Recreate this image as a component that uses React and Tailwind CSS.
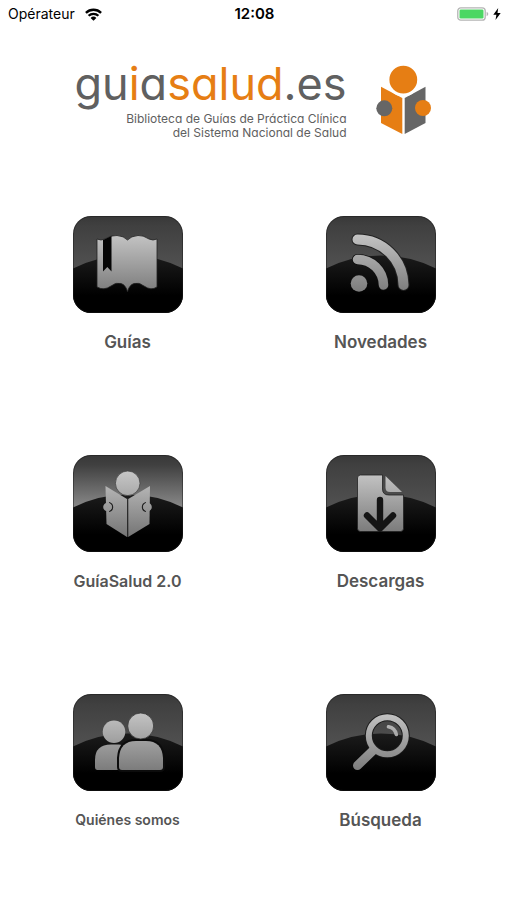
import { useId } from 'react';

const Book = ({ fill }) => (
  <>
    <path
      fill={fill}
      stroke="#222"
      strokeWidth="0.8"
      d="M24 23 Q28 25 32 23 Q38 19 44 19.500 Q51 20 54.500 24 Q58 20 65 19.500 Q70 19 76 23 Q80 25 84 23 V71 Q78 75 71 70 Q66 66 61 67.500 Q56 69 54.500 76 Q53 69 48 67.500 Q43 66 38 70 Q31 75 24 71 Z"
    />
    <path fill="#050505" d="M30 24 L38.500 20 V55.500 L34.300 51 L30 55.500 Z" />
  </>
);

const Feed = ({ fill }) => (
  <>
    <circle cx="33" cy="67.500" r="8.300" fill={fill} />
    <g fill="none" strokeLinecap="round">
      <path stroke="#111" strokeWidth="11" d="M31.500 43.500 A26 26 0 0 1 57.500 69" />
      <path stroke="#222" strokeWidth="12" d="M31.500 23.500 A46 46 0 0 1 77.500 69" />
      <path stroke={fill} strokeWidth="9.500" d="M31.500 43.500 A26 26 0 0 1 57.500 69" />
      <path stroke={fill} strokeWidth="10" d="M31.500 23.500 A46 46 0 0 1 77.500 69" />
    </g>
  </>
);

const Reader = ({ fill }) => (
  <>
    <path fill={fill} d="M32.500 31 L54 44 V82 L33.500 69 Z" />
    <path fill={fill} d="M77 31 L55.200 44 V82 L76.500 69 Z" />
    <path stroke="#333" strokeWidth="0.9" d="M54.600 43.500 V82" />
    <circle cx="54.700" cy="28.300" r="12.300" fill={fill} stroke="#444" strokeWidth="0.8" />
    <path fill="none" stroke="#222" strokeWidth="1.300" d="M36 47.600 A4.500 4.500 0 0 1 36 56.400 M73 47.600 A4.500 4.500 0 0 0 73 56.400" />
    <circle cx="34.500" cy="52" r="4.300" fill={fill} />
    <circle cx="74.500" cy="52" r="4.300" fill={fill} />
  </>
);

const Download = ({ fill }) => (
  <>
    <path
      fill={fill}
      stroke="#222"
      strokeWidth="0.8"
      d="M34.500 20 H56.500 V34 Q56.500 40 63 40 H77.500 V73.500 Q77.500 76.500 74.500 76.500 H34.500 Q31.500 76.500 31.500 73.500 V23 Q31.500 20 34.500 20 Z"
    />
    <path fill={fill} d="M59.500 21 L76 37 H64 Q59.500 37 59.500 32.500 Z" />
    <path
      fill="none"
      stroke="#151515"
      strokeWidth="6.400"
      strokeLinecap="round"
      strokeLinejoin="round"
      d="M54 45 V73 M41 60.500 L54 73.500 L67 60.500"
    />
  </>
);

const People = ({ fill }) => (
  <>
    <circle cx="41" cy="37.700" r="11.300" fill={fill} />
    <path fill={fill} d="M22 73 V66 Q22 50.500 38 50.500 H46 Q56 51 56 60 V76 H24.500 Q22 76 22 73 Z" />
    <path
      fill={fill}
      stroke="#0c0c0c"
      strokeWidth="4"
      paintOrder="stroke"
      d="M46 73 V64 Q47 47 63 47 H73 Q89 47 90 64 V73 Q90 76 87 76 H49 Q46 76 46 73 Z"
    />
    <circle cx="67.700" cy="32" r="13" fill={fill} stroke="#333" strokeWidth="0.8" />
  </>
);

const Search = ({ fill }) => (
  <g fill="none" strokeLinecap="round">
    <circle cx="61.300" cy="41.700" r="18.500" stroke="#1c1c1c" strokeWidth="8" />
    <path stroke={fill} strokeWidth="9" d="M46.500 57 L31.500 71.500" />
    <circle cx="61.300" cy="41.700" r="18.500" stroke={fill} strokeWidth="6" />
    <path stroke={fill} strokeWidth="3.600" d="M62.500 32.800 Q69 34 70.300 40.500" />
  </g>
);

const items = [
  { label: 'Guías', Icon: Book, text: 'text-[17px]' },
  { label: 'Novedades', Icon: Feed, text: 'text-[17px]' },
  { label: 'GuíaSalud 2.0', Icon: Reader, text: 'text-[16px]', glow: '#858585' },
  { label: 'Descargas', Icon: Download, text: 'text-[17px]' },
  { label: 'Quiénes somos', Icon: People, text: 'text-[14px]' },
  { label: 'Búsqueda', Icon: Search, text: 'text-[17px]' },
];

const Tile = ({ Icon, glow = '#505050' }) => {
  const id = useId();

  return (
    <svg viewBox="0 0 110 97" className="h-[97px] w-[110px]" aria-hidden="true">
      <defs>
        <linearGradient id={`${id}sky`} x1="0" y1="0" x2="0" y2="50" gradientUnits="userSpaceOnUse">
          <stop offset="0" stopColor="#383838" />
          <stop offset="0.2" stopColor="#404040" />
          <stop offset="1" stopColor={glow} />
        </linearGradient>
        <linearGradient id={`${id}hill`} x1="0" y1="39" x2="0" y2="97" gradientUnits="userSpaceOnUse">
          <stop offset="0" stopColor="#1c1c1c" />
          <stop offset="0.7" stopColor="#000" />
        </linearGradient>
        <linearGradient id={`${id}icon`} x1="0" y1="17" x2="0" y2="80" gradientUnits="userSpaceOnUse">
          <stop offset="0" stopColor="#c6c6c6" />
          <stop offset="1" stopColor="#777" />
        </linearGradient>
        <clipPath id={`${id}clip`}>
          <rect width="110" height="97" rx="18" />
        </clipPath>
      </defs>
      <g clipPath={`url(#${id}clip)`}>
        <rect width="110" height="97" fill={`url(#${id}sky)`} />
        <path fill={`url(#${id}hill)`} d="M0 52.500 A123 123 0 0 1 110 52.500 V97 H0 Z" />
        <rect x="0.500" y="0.500" width="109" height="96" rx="17.500" fill="none" stroke="#1a1a1a" strokeOpacity="0.5" />
      </g>
      <Icon fill={`url(#${id}icon)`} />
    </svg>
  );
};

const StatusBar = () => (
  <div className="grid h-7 grid-cols-3 items-center pr-1.5 pl-2 text-black">
    <div className="flex items-center gap-2.5">
      <span className="text-[14px] leading-5">Opérateur</span>
      <svg viewBox="0 0 17 13" className="h-[13px] w-[17px]" aria-hidden="true">
        <g fill="none" stroke="#000" strokeWidth="2.300">
          <path d="M0.900 4.900 A10.800 10.800 0 0 1 16.100 4.900" />
          <path d="M3.600 7.800 A7 7 0 0 1 13.400 7.800" />
        </g>
        <path d="M8.500 12.800 L5.600 9.900 A4.100 4.100 0 0 1 11.400 9.900 Z" />
      </svg>
    </div>
    <span className="text-center text-[15px] leading-5 font-semibold">12:08</span>
    <div className="flex items-center justify-end gap-1">
      <svg viewBox="0 0 32 14" className="h-[14px] w-8" aria-hidden="true">
        <rect x="0.800" y="0.800" width="27.400" height="12.400" rx="3" fill="#fff" stroke="#b4b4b4" strokeWidth="1.300" />
        <rect x="2.500" y="2.500" width="24" height="9" rx="1.300" fill="#4bd763" />
        <path fill="#b4b4b4" d="M29.600 4.800 Q31.300 5.500 31.300 7 Q31.300 8.500 29.600 9.200 Z" />
      </svg>
      <svg viewBox="0 0 8 12" className="h-3 w-2" aria-hidden="true">
        <path d="M5.200 0 L0.300 6.800 H3.400 L2.500 12 L7.700 4.900 H4.500 Z" />
      </svg>
    </div>
  </div>
);

const Logo = () => (
  <header className="flex justify-center gap-[26px] pt-7">
    <div className="text-right text-[#606060] [font-feature-settings:'cv11']">
      <h1 className="text-[45px] leading-[56px] font-normal">
        gu<span className="text-[#e67e14]">i</span>a<span className="text-[#e67e14]">salud</span>.es
      </h1>
      <p className="text-[12px] leading-[14px]">
        Biblioteca de Guías de Práctica Clínica
        <br />
        del Sistema Nacional de Salud
      </p>
    </div>
    <svg viewBox="0 0 60 76" className="mt-1.5 h-[76px] w-[60px]" aria-hidden="true">
      <path fill="#e67e14" d="M8 24.700 L29.300 36 V72 L8 61 Z" />
      <path fill="#666" d="M52.500 24.700 L31.700 36 V72 L52.500 61 Z" />
      <circle cx="30.300" cy="17.700" r="15.300" fill="#e67e14" stroke="#fff" strokeWidth="2.800" />
      <circle cx="11.300" cy="46.300" r="8" fill="#666" />
      <circle cx="50" cy="46" r="8" fill="#e67e14" />
    </svg>
  </header>
);

const App = () => {
  return (
    <div className="min-h-screen bg-white font-['Inter','Liberation_Sans',sans-serif]">
      <StatusBar />
      <Logo />
      <main className="grid grid-cols-2 gap-y-[101px] pt-[76px] pb-16 pl-px">
        {items.map(({ label, Icon, text, glow }) => (
          <button key={label} type="button" className="flex cursor-pointer flex-col items-center gap-[17px] justify-self-center">
            <Tile Icon={Icon} glow={glow} />
            <span className={`${text} leading-6 font-semibold text-[#555]`}>{label}</span>
          </button>
        ))}
      </main>
    </div>
  );
};

export default App;
